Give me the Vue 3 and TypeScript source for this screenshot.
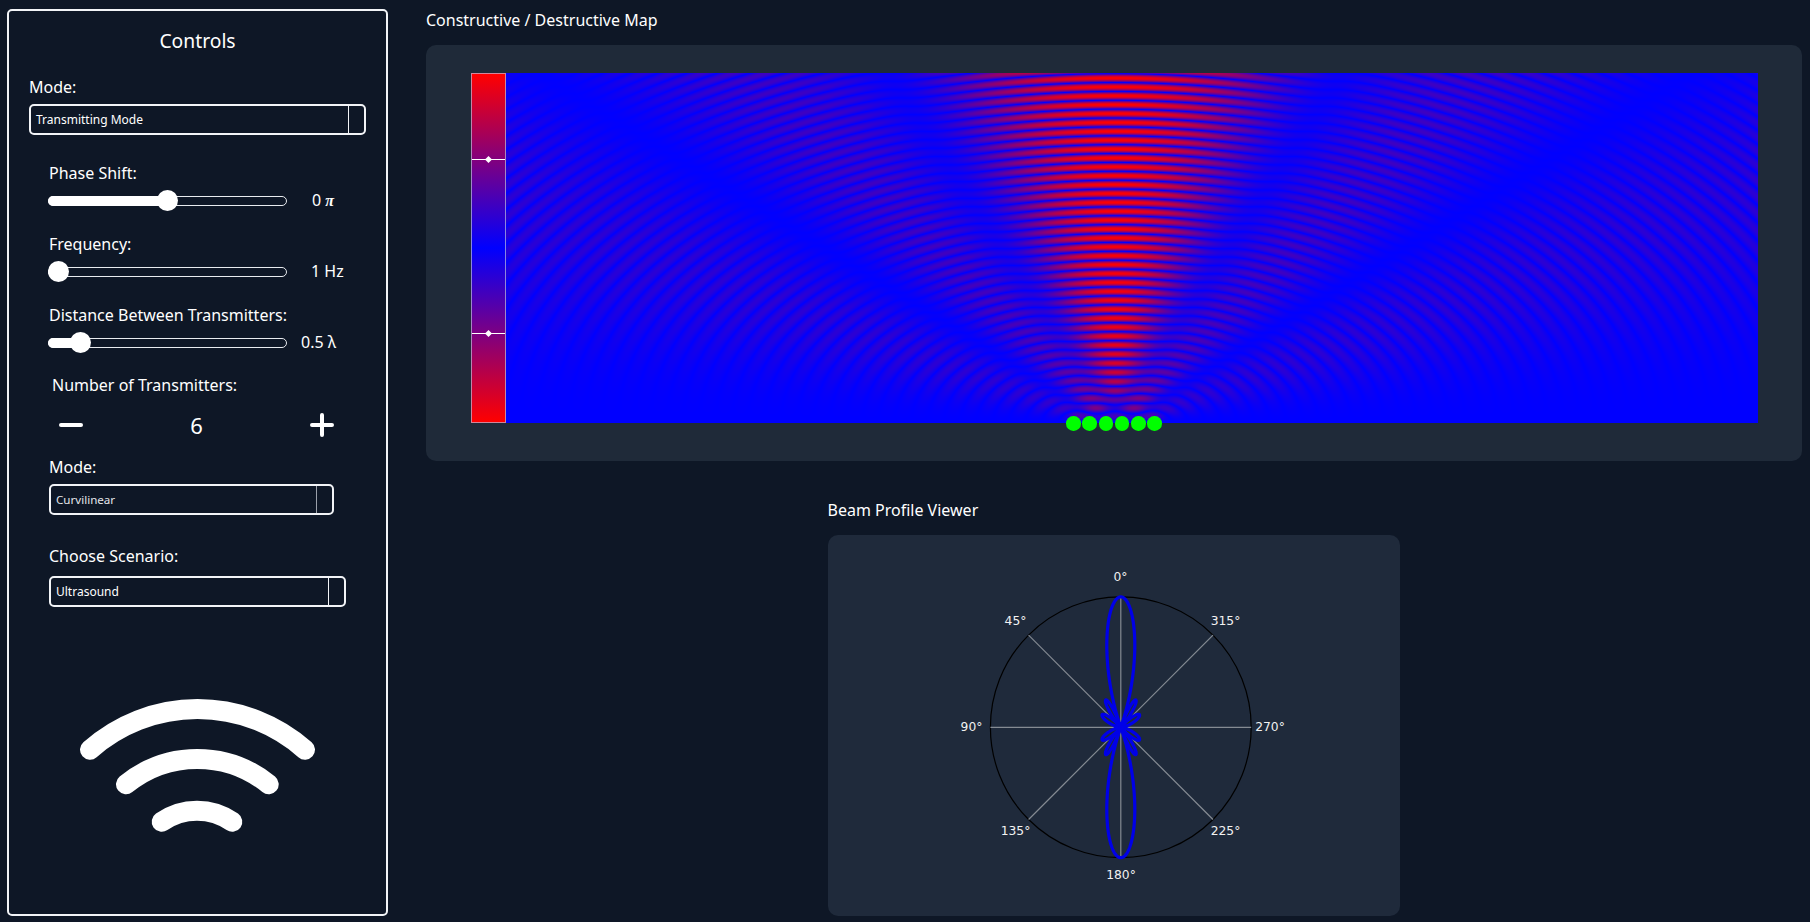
<template>
  <div class="page">
    <aside class="controls">
      <h2 class="controls-title">Controls</h2>

      <label class="field-label mode-label">Mode:</label>
      <div class="select select-main">
        <span class="select-text">Transmitting Mode</span>
        <span class="select-arrow"></span>
      </div>

      <div class="sliders">
        <div class="slider-group" v-for="slider in sliders" :key="slider.label">
          <label class="field-label">{{ slider.label }}</label>
          <div class="slider-row">
            <div class="track">
              <div class="track-fill" :style="{ width: thumbLeft(slider) + 'px' }"></div>
              <div class="thumb" :style="{ left: thumbLeft(slider) + 'px' }"></div>
            </div>
            <span class="slider-value" :class="slider.cls">
              {{ slider.value }} <i v-if="slider.unit === 'π'" class="pi">π</i><template v-else>{{ slider.unit }}</template>
            </span>
          </div>
        </div>

        <label class="field-label count-label">Number of Transmitters:</label>
        <div class="stepper">
          <svg width="24" height="24" viewBox="0 0 24 24">
            <path d="M2 12H22" stroke="#fff" stroke-width="4" stroke-linecap="round" />
          </svg>
          <span class="stepper-value">{{ count }}</span>
          <svg width="24" height="24" viewBox="0 0 24 24">
            <path d="M2 12H22M12 2V22" stroke="#fff" stroke-width="4" stroke-linecap="round" />
          </svg>
        </div>

        <label class="field-label second-mode">Mode:</label>
        <div class="select select-curve">
          <span class="select-text">Curvilinear</span>
          <span class="select-arrow dim"></span>
        </div>

        <label class="field-label scenario-label">Choose Scenario:</label>
        <div class="select select-scenario">
          <span class="select-text">Ultrasound</span>
          <span class="select-arrow"></span>
        </div>
      </div>

      <svg class="wifi" width="255" height="155" viewBox="70 690 255 155">
        <g fill="none" stroke="#fff" stroke-width="20" stroke-linecap="round">
          <path d="M90 750.7A162.3 162.3 0 0 1 305 750.7" />
          <path d="M126 785.3A113 113 0 0 1 268.7 785.3" />
          <path d="M161.7 822.7A62 62 0 0 1 232.3 822.7" />
        </g>
      </svg>
    </aside>

    <main class="content">
      <h3 class="section-title">Constructive / Destructive Map</h3>
      <section class="map-card">
        <div class="map-plot">
          <div class="colorbar">
            <div class="tick tick-top"></div>
            <div class="tick tick-bottom"></div>
          </div>
          <canvas ref="mapCanvas" class="map-canvas" :width="MAP_W" :height="MAP_H"></canvas>
          <div class="dots">
            <span class="dot" v-for="n in count" :key="n"></span>
          </div>
        </div>
      </section>

      <h3 class="section-title beam-title">Beam Profile Viewer</h3>
      <section class="beam-card">
        <svg width="572.5" height="381" viewBox="827.5 535 572.5 381">
          <circle :cx="CX" :cy="CY" :r="RADIUS" fill="none" stroke="#000" stroke-width="1.2" />
          <line
            v-for="spoke in spokes"
            :key="spoke"
            :x1="CX"
            :y1="CY"
            :x2="CX + RADIUS * Math.sin(spoke)"
            :y2="CY - RADIUS * Math.cos(spoke)"
            stroke="#858b93"
            stroke-width="1.2"
          />
          <path :d="beamPath" fill="none" stroke="#0000e8" stroke-width="3.2" stroke-linejoin="round" />
          <text
            v-for="tick in angleLabels"
            :key="tick.text"
            :x="tick.x"
            :y="tick.y"
            class="angle-label"
            text-anchor="middle"
            dominant-baseline="central"
          >{{ tick.text }}</text>
        </svg>
      </section>
    </main>
  </div>
</template>

<script setup lang="ts">
import { computed, onMounted, ref } from 'vue';

interface SliderItem {
  label: string;
  value: number;
  min: number;
  max: number;
  unit: string;
  cls: string;
}

const MAP_W = 1252;
const MAP_H = 350;
const SOURCE_X = 608.5;
const WAVELENGTH = 17.73;
// the field is a 2:1 grid stretched over the plot, colorbar included
const STRETCH = 1.8386;

const CX = 1120.3;
const CY = 727.3;
const RADIUS = 130.4;

const count = ref(6);

const sliders: SliderItem[] = [
  { label: 'Phase Shift:', value: 0, min: -1, max: 1, unit: 'π', cls: 'value-phase' },
  { label: 'Frequency:', value: 1, min: 1, max: 20, unit: 'Hz', cls: 'value-freq' },
  { label: 'Distance Between Transmitters:', value: 0.5, min: 0.1, max: 4, unit: 'λ', cls: 'value-dist' },
];

const thumbLeft = (s: SliderItem): number => 10.5 + ((s.value - s.min) / (s.max - s.min)) * 218;

const spokes = [0, 45, 90, 135, 180, 225, 270, 315].map((d) => (d * Math.PI) / 180);

const angleLabels = [
  { text: '0°', x: 1120, y: 577 },
  { text: '45°', x: 1015, y: 620.5 },
  { text: '315°', x: 1225, y: 620.5 },
  { text: '90°', x: 971, y: 727 },
  { text: '270°', x: 1269.5, y: 727 },
  { text: '135°', x: 1015, y: 831 },
  { text: '225°', x: 1225, y: 831 },
  { text: '180°', x: 1120.5, y: 875 },
];

// array factor for N elements half a wavelength apart
const arrayFactor = (theta: number): number => {
  const psi = Math.PI * Math.sin(theta);
  const bottom = count.value * Math.sin(psi / 2);
  if (Math.abs(bottom) < 1e-6) return 1;
  return Math.abs(Math.sin((count.value * psi) / 2) / bottom);
};

const beamPath = computed((): string => {
  const pts: string[] = [];
  for (let i = 0; i <= 3600; i++) {
    const t = (i / 3600) * Math.PI * 2;
    const r = RADIUS * arrayFactor(t);
    pts.push(`${(CX + r * Math.sin(t)).toFixed(2)} ${(CY - r * Math.cos(t)).toFixed(2)}`);
  }
  return 'M' + pts.join('L') + 'Z';
});

const mapCanvas = ref<HTMLCanvasElement | null>(null);

onMounted(() => {
  const ctx = mapCanvas.value?.getContext('2d');
  if (!ctx) return;
  const img = ctx.createImageData(MAP_W, MAP_H);
  const k = (2 * Math.PI) / WAVELENGTH;
  const sources: number[] = [];
  for (let i = 0; i < count.value; i++) {
    sources.push((i - (count.value - 1) / 2) * (WAVELENGTH / 2));
  }
  for (let y = 0; y < MAP_H; y++) {
    for (let x = 0; x < MAP_W; x++) {
      const gridX = (x - SOURCE_X) / STRETCH;
      let sum = 0;
      for (const sx of sources) {
        sum += Math.cos(k * Math.hypot(gridX - sx, y - MAP_H));
      }
      const v = Math.abs(sum) / count.value;
      const p = (y * MAP_W + x) * 4;
      img.data[p] = 255 * v;
      img.data[p + 1] = 0;
      img.data[p + 2] = 255 * (1 - v);
      img.data[p + 3] = 255;
    }
  }
  ctx.putImageData(img, 0, 0);
});
</script>

<style scoped>
.page {
  display: flex;
  align-items: flex-start;
  height: 922px;
  box-sizing: border-box;
  padding: 9px 8px 0 7px;
  overflow: hidden;
  color: #fff;
  font-family: "Noto Sans", "Open Sans", sans-serif;
}

.controls {
  width: 381px;
  height: 907px;
  box-sizing: border-box;
  padding: 16px 20px 0;
  border: 2px solid #f2f4f7;
  border-radius: 5px;
  flex-shrink: 0;
}

.controls-title {
  margin: 0;
  font-size: 19.3px;
  font-weight: 400;
  line-height: 28px;
  text-align: center;
}

.field-label {
  display: block;
  font-size: 16px;
  line-height: 20px;
}

.mode-label {
  margin-top: 22px;
}

.select {
  display: flex;
  align-items: center;
  justify-content: space-between;
  box-sizing: border-box;
  height: 31px;
  margin-top: 7px;
  padding-left: 5px;
  border: 2px solid #f2f4f7;
  border-radius: 5px;
}

.select-text {
  font-size: 12px;
}

.select-arrow {
  width: 15px;
  height: 100%;
  border-left: 1px solid #f2f4f7;
}

.select-arrow.dim {
  border-left-color: #9aa0aa;
}

.select-main {
  width: 337px;
}

.select-curve {
  width: 285px;
}

.select-curve .select-text {
  font-size: 11.6px;
  color: #e4e6ea;
}

.select-scenario {
  width: 297px;
  margin-top: 10px;
}

.sliders {
  padding-left: 20px;
  margin-top: 28px;
}

.slider-group + .slider-group {
  margin-top: 23px;
}

.slider-row {
  display: flex;
  align-items: center;
  margin-top: 7px;
  margin-left: -1px;
}

.track {
  position: relative;
  width: 239px;
  height: 10px;
  box-sizing: border-box;
  border: 1px solid #e8ebef;
  border-radius: 5px;
  flex-shrink: 0;
}

.track-fill {
  height: 100%;
  margin: -1px;
  padding: 1px 0;
  box-sizing: content-box;
  background: #fff;
  border-radius: 5px 0 0 5px;
}

.thumb {
  position: absolute;
  top: 50%;
  width: 21px;
  height: 21px;
  margin: -10.5px 0 0 -11.5px;
  background: #fff;
  border-radius: 50%;
}

.slider-value {
  font-size: 16px;
  line-height: 21px;
  white-space: nowrap;
}

.value-phase {
  margin-left: 25px;
}

.value-freq {
  margin-left: 24px;
}

.value-dist {
  margin-left: 14px;
}

.pi {
  font-family: "Liberation Serif", serif;
  font-weight: 700;
}

.count-label {
  margin-top: 21.5px;
  margin-left: 3px;
}

.stepper {
  display: flex;
  align-items: center;
  justify-content: space-between;
  width: 275px;
  height: 30px;
  margin-top: 15px;
  margin-left: 10px;
}

.stepper-value {
  font-size: 22px;
}

.second-mode {
  margin-top: 17px;
}

.select-curve {
  margin-top: 7px;
}

.scenario-label {
  margin-top: 31px;
}

.wifi {
  display: block;
  margin: 82.5px auto 0;
}

.content {
  flex: 1;
  margin-left: 38px;
  min-width: 0;
}

.section-title {
  margin: 0;
  font-size: 16px;
  font-weight: 400;
  line-height: 23px;
}

.map-card {
  box-sizing: border-box;
  height: 416px;
  margin-top: 13px;
  padding: 28px 44.5px 0;
  background: #1f2a39;
  border-radius: 10px;
}

.map-plot {
  position: relative;
  display: flex;
  height: 350px;
}

.colorbar {
  position: relative;
  width: 35px;
  box-sizing: border-box;
  border: 1px solid rgba(190, 190, 220, 0.7);
  background: linear-gradient(#f00, #00f 50%, #f00);
}

.tick {
  position: absolute;
  left: 0;
  right: 0;
  height: 1px;
  background: #fff;
}

.tick::after {
  content: '';
  position: absolute;
  left: 50%;
  top: -2px;
  width: 5px;
  height: 5px;
  margin-left: -2.5px;
  background: #fff;
  transform: rotate(45deg);
}

.tick-top {
  top: 24.5%;
}

.tick-bottom {
  top: 74.5%;
}

.map-canvas {
  display: block;
  width: 1252px;
  height: 350px;
  filter: blur(0.6px);
}

.dots {
  position: absolute;
  left: 50%;
  bottom: -7.5px;
  display: flex;
  gap: 1.7px;
  transform: translateX(-50%);
}

.dot {
  width: 14.6px;
  height: 14.6px;
  background: #00ff00;
  border-radius: 50%;
}

.beam-title {
  margin-top: 38px;
  margin-left: 401.5px;
}

.beam-card {
  width: 572.5px;
  height: 381px;
  margin-top: 13px;
  margin-left: 401.5px;
  background: #1f2a3b;
  border-radius: 10px;
  overflow: hidden;
}

.beam-card svg {
  display: block;
}

.angle-label {
  fill: #f2f2f2;
  font-family: "DejaVu Sans", sans-serif;
  font-size: 12.3px;
}
</style>

<style>
html,
body {
  margin: 0;
  background: #0e1726;
}
</style>
